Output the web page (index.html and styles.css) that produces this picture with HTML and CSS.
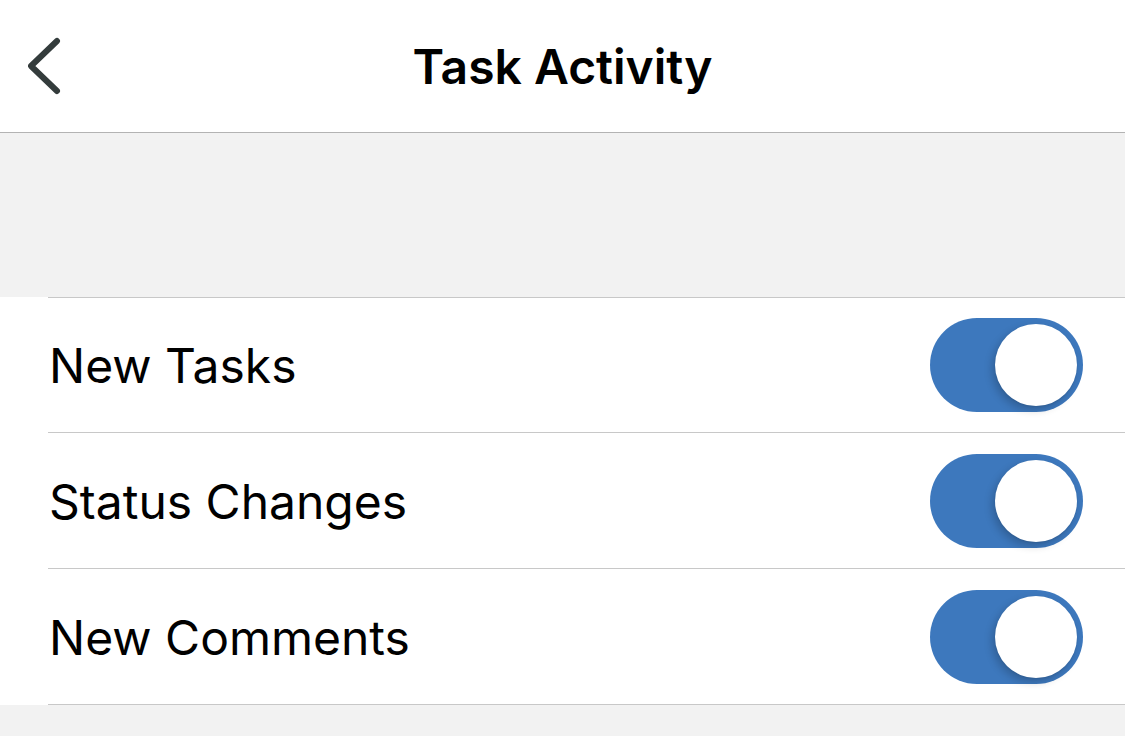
FILE: index.html
```html
<!DOCTYPE html>
<html>
<head>
<meta charset="utf-8">
<link rel="stylesheet" href="styles.css">
</head>
<body>
<div class="screen">
  <header class="nav">
    <button class="back" aria-label="Back">
      <svg width="40" height="64" viewBox="0 0 40 64">
        <polyline points="29,7 3,32 29,57" fill="none" stroke="#343c3c" stroke-width="6" stroke-linecap="round" stroke-linejoin="round"/>
      </svg>
    </button>
    <h1 class="title">Task Activity</h1>
  </header>
  <div class="spacer"></div>
  <section class="group">
    <div class="list">
      <div class="row"><span class="label">New Tasks</span><span class="toggle on"><span class="knob"></span></span></div>
      <div class="row"><span class="label">Status Changes</span><span class="toggle on"><span class="knob"></span></span></div>
      <div class="row"><span class="label">New Comments</span><span class="toggle on"><span class="knob"></span></span></div>
    </div>
  </section>
</div>
</body>
</html>
```

FILE: styles.css
```css
* { box-sizing: border-box; }
html, body {
  margin: 0;
  padding: 0;
  background: #f2f2f2;
  font-family: Inter, "Noto Sans", "Liberation Sans", sans-serif;
  color: #000;
}
.screen {
  width: 1125px;
  height: 736px;
  overflow: hidden;
  background: #f2f2f2;
}
.nav {
  height: 133px;
  background: #fff;
  border-bottom: 1px solid #b3b3b3;
  display: flex;
  align-items: center;
  justify-content: center;
  position: relative;
}
.back {
  position: absolute;
  left: 28px;
  top: 34px;
  width: 40px;
  height: 64px;
  padding: 0;
  border: 0;
  background: none;
}
.back svg { display: block; }
.title {
  margin: 0;
  font-size: 48px;
  font-weight: 600;
  letter-spacing: 0;
  line-height: 1;
  margin-top: 2px;
}
.spacer {
  height: 164px;
}
.group {
  background: #fff;
  padding-left: 48px;
}
.list {
  border-top: 1px solid #c8c8c8;
}
.row {
  height: 136px;
  border-bottom: 1px solid #c8c8c8;
  display: flex;
  align-items: center;
  justify-content: space-between;
  padding-left: 1px;
  padding-right: 42px;
}
.row:first-child {
  height: 135px;
}
.label {
  font-size: 48px;
  font-weight: 400;
  line-height: 1;
  padding-top: 2px;
}
.toggle {
  width: 153px;
  height: 94px;
  border-radius: 47px;
  background: #3d78bd;
  display: flex;
  align-items: center;
  justify-content: flex-end;
  padding-right: 6px;
}
.knob {
  width: 82px;
  height: 82px;
  border-radius: 50%;
  background: #fff;
  box-shadow: -3px 4px 9px rgba(0, 0, 0, 0.2), 0 1px 2px rgba(0, 0, 0, 0.08);
}
```
